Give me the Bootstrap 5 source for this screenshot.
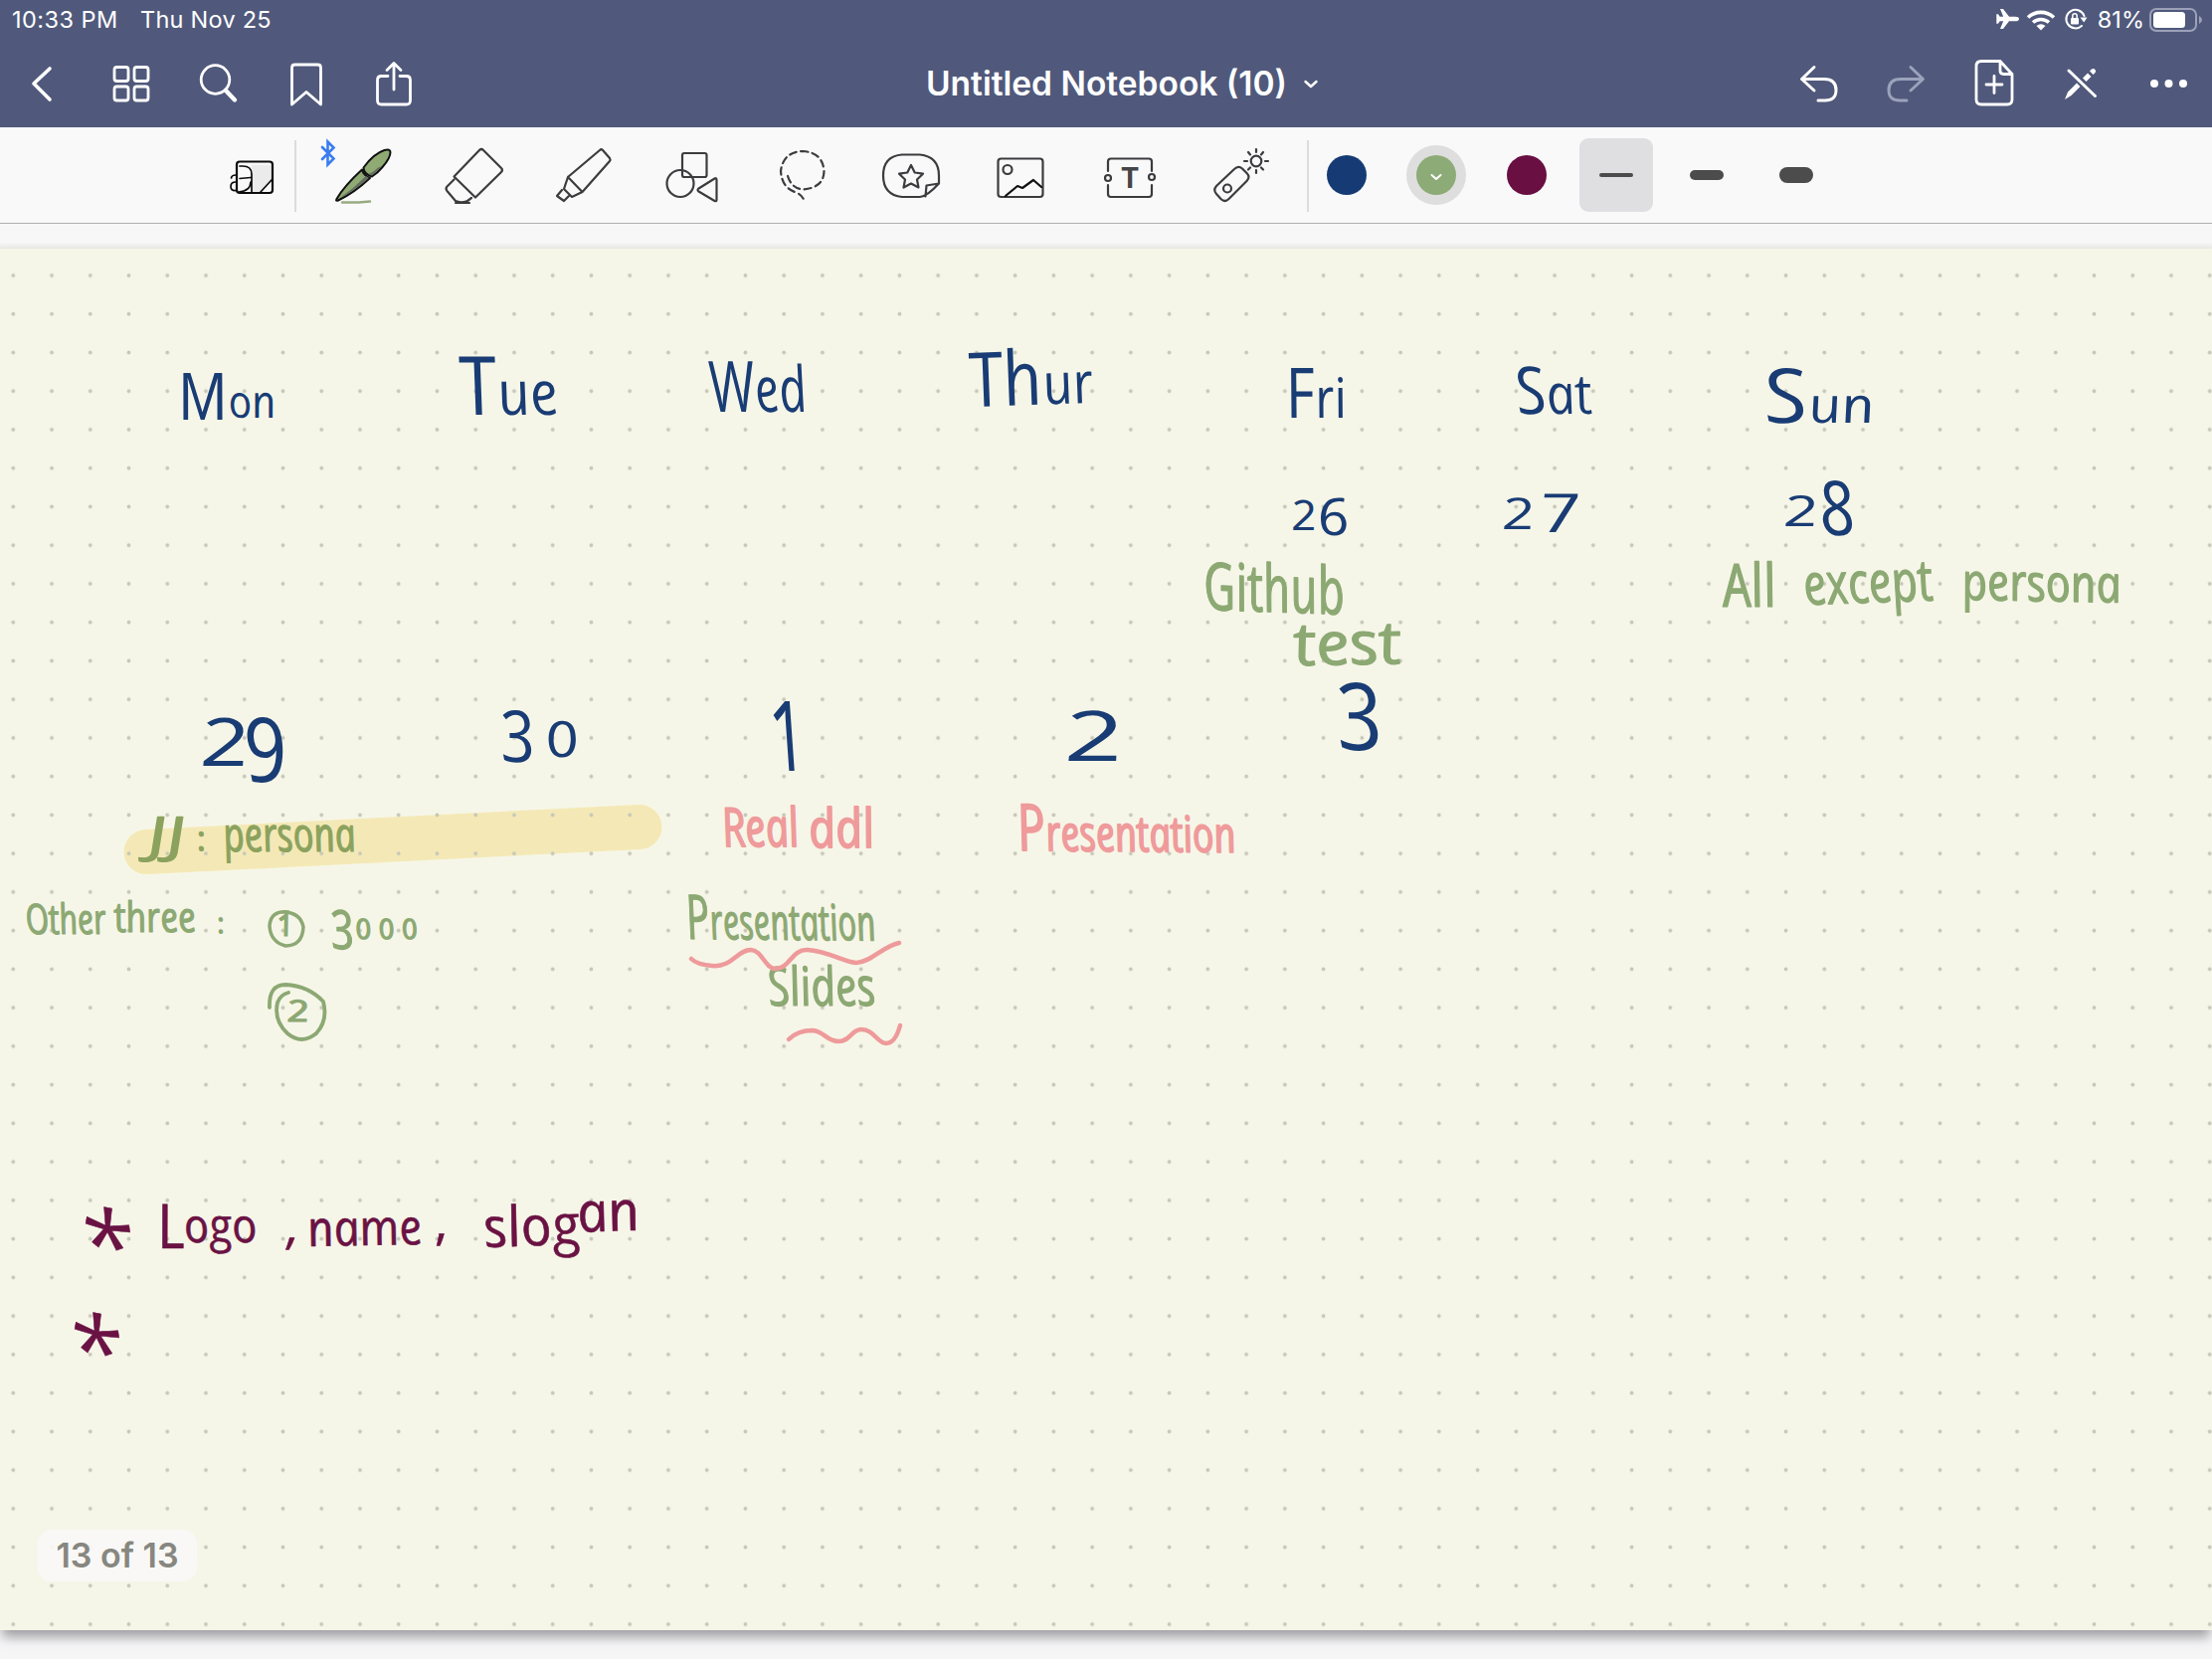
<!DOCTYPE html>
<html lang="en">
<head>
<meta charset="utf-8">
<meta name="viewport" content="width=device-width, initial-scale=1">
<title>Untitled Notebook (10)</title>
<link href="https://cdn.jsdelivr.net/npm/bootstrap@5.3.0/dist/css/bootstrap.min.css" rel="stylesheet">
<style>
body{font-family:Inter,"Liberation Sans",sans-serif;background:#f6f6f7;height:1668px;overflow:hidden}
svg{display:block;flex:none;fill:none;stroke-linecap:round;stroke-linejoin:round}
.app-head{background:#50597b;height:128px;color:#fff}
.status-row{height:40px;font-size:23.500px;line-height:40px;padding-left:12px;padding-right:8px}
.status-row .clock{width:129px;letter-spacing:.45px}
.status-row .today{letter-spacing:.25px}
.nav-row{height:88px}
.nav-row svg{stroke:#fff;stroke-width:3.6}
.doc-title{font-size:33.5px;font-weight:600;line-height:88px;padding-left:32px;white-space:nowrap}
.tools{height:97px;background:#f9f9fa;border-bottom:1.5px solid #adafad;padding-left:199px}
.tools svg{stroke:#3c3c3e;stroke-width:2.2}
.rule{width:2px;height:72px;background:#dcdcde;margin-top:13px;flex:none}
.gutter{height:25px;background:linear-gradient(#f7f7f7 75%,#e9e9e7)}
.sheet{height:1389px;background-color:#f6f6e8;box-shadow:0 9px 11px -2px rgba(90,85,95,.55)}
.ink text{font-family:"Open Sans","Noto Sans",sans-serif;font-style:italic;font-weight:400;stroke:none}
.blue{fill:#193c74}
.ink .green text{stroke:#8ca873;stroke-width:1.200px}
.ink .on-marker text{stroke:#8ba25e}
.ink .pink text{stroke:#ef9a9b;stroke-width:1.800px}
.ink .wine text{stroke:#6a1244;stroke-width:.6px}
.green{fill:#8ca873}.pink{fill:#ef9a9b}.wine{fill:#6a1244}.on-marker{fill:#8ba25e}
.pager{left:38px;bottom:49px;width:160px;height:52px;border-radius:14px;background:rgba(248,247,246,.92);color:#878780;font-size:34px;font-weight:600;line-height:52px;text-align:center}
</style>
</head>
<body>
<header class="app-head">
  <div class="status-row d-flex align-items-center">
    <span class="clock">10:33 PM</span><span class="today">Thu Nov 25</span>
    <div class="ms-auto d-flex align-items-center">
      <svg width="98" height="40" viewBox="2004 0 98 40">
        <path fill="#fff" d="M2031 19q0-2.300-4-2.300h-6l-6-7.700h-3l3.200 7.700h-3.500l-1.700-2.500h-1.700v9.600h1.700l1.700-2.500h3.500L2012 29h3l6-7.700h6q4 0 4-2.300z"/>
        <path stroke="#fff" stroke-width="3.600" stroke-linecap="butt" d="M2040 17.500a19 19 0 0 1 26 0M2045 22.500a12 12 0 0 1 16 0"/>
        <path fill="#fff" d="M2048.500 26a7 7 0 0 1 9 0l-4.500 4.500z"/>
        <path stroke="#fff" stroke-width="2" d="M2096.500 16a9.300 9.300 0 1 0-2.500 10"/>
        <path fill="#fff" d="M2092.500 17.500h7l-3.300 5z"/>
        <rect fill="#fff" x="2083" y="18" width="8" height="6.500" rx="1"/>
        <path stroke="#fff" stroke-width="1.500" d="M2084.800 18v-2a2.200 2.200 0 0 1 4.400 0v2"/>
      </svg>
      <span class="ms-2">81%</span>
      <svg class="ms-1" width="56" height="40" viewBox="2160 0 56 40">
        <rect x="2162" y="9" width="46" height="22" rx="6" stroke="#9ba1b8" stroke-width="2"/>
        <rect x="2165" y="12" width="32" height="16" rx="3.500" fill="#fff"/>
        <path fill="#9ba1b8" d="M2211 16q3 1.500 3 4t-3 4z"/>
      </svg>
    </div>
  </div>
  <div class="nav-row d-flex justify-content-between">
    <div class="d-flex">
      <svg width="88" height="88" viewBox="0 40 88 88"><path d="M50 69 34 84l16 16"/></svg>
      <svg width="88" height="88" viewBox="88 40 88 88"><g stroke-width="2.800"><rect x="115" y="67.500" width="14" height="14" rx="2.500"/><rect x="135" y="67.500" width="14" height="14" rx="2.500"/><rect x="115" y="87" width="14" height="14" rx="2.500"/><rect x="135" y="87" width="14" height="14" rx="2.500"/></g></svg>
      <svg width="88" height="88" viewBox="176 40 88 88"><circle cx="216.500" cy="80" r="14.300" stroke-width="2.800"/><path d="m227 91 9 9.500" stroke-width="4.400"/></svg>
      <svg width="88" height="88" viewBox="264 40 88 88"><path stroke-width="2.800" d="M293.500 105V68q0-3 3-3h23q3 0 3 3v37L308 92.500z"/></svg>
      <svg width="88" height="88" viewBox="352 40 88 88"><path stroke-width="2.800" d="M390 76.500h-6.500q-4 0-4 4V101q0 4 4 4h25q4 0 4-4V80.500q0-4-4-4H402M396 90V64m-7 6.500 7-7 7 7"/></svg>
    </div>
    <div class="doc-title d-flex align-items-center"><span>Untitled Notebook (10)</span>
      <svg width="14" height="88" viewBox="1310 40 14 88" style="margin-left:17px"><path stroke-width="2.400" d="m1311.500 82 5.500 5 5.500-5"/></svg></div>
    <div class="d-flex">
      <svg width="88" height="88" viewBox="1784 40 88 88"><path stroke-width="3" d="m1824 67.500-12.500 12 12.500 11.500M1812 79.500h22q12 0 12 11t-12 10.500h-6"/></svg>
      <svg width="88" height="88" viewBox="1872 40 88 88"><path stroke="#9ba2bb" stroke-width="3" d="m1921 67.500 12.500 12L1921 91M1933 79.500h-22q-12 0-12 11t12 10.500h6"/></svg>
      <svg width="88" height="88" viewBox="1960 40 88 88"><path stroke-width="2.800" d="M1992 61.500h19l12 13V100q0 5-5 5h-26q-5 0-5-5V66.500q0-5 5-5zm19 0V71q0 3.500 3.500 3.500h8.500M1997 85h16m-8-8.500v17"/></svg>
      <svg width="88" height="88" viewBox="2048 40 88 88"><path stroke-width="3" d="m2080 71 26.500 25.500"/><path fill="#fff" stroke="none" d="m2076 100 3-7.500 9-9 3.500 3.500-9 9zM2094 78.500l5-5 3.500 3.500-5 5zM2101 71.500l2-2q1.800-1.200 3.300.3t.3 3.300l-2 2z"/></svg>
      <svg width="88" height="88" viewBox="2136 40 88 88"><g fill="#fff" stroke="none"><circle cx="2166" cy="84" r="4"/><circle cx="2180.500" cy="84" r="4"/><circle cx="2195" cy="84" r="4"/></g></svg>
    </div>
  </div>
</header>

<div class="tools d-flex">
  <svg width="97" height="96" viewBox="199 128 97 96">
    <g stroke="#0c0c0c"><path stroke="none" fill="#ebebec" d="M253 166h20v16l-10 11h-10z"/><rect x="238" y="162.500" width="36" height="31.500" rx="3"/><path stroke-width="1.700" d="M241 167h3q9 0 9 8v18M241 179.500l11-1M240 193q12-1 12-10M237 176q-4 0-4.500 3M237 183q-5 0-5 4.500t5 4M273 181l-11 12"/></g>
  </svg>
  <div class="rule"></div>
  <svg width="122" height="96" viewBox="298 128 122 96">
    <path stroke="#3b7df0" stroke-width="2.600" stroke-linejoin="miter" d="m324 148 11.500 11.500-6 6v-23l6 6L324 160"/>
    <path stroke="#98aa80" stroke-width="2.400" d="M344 203.500h17l11-1"/>
    <g stroke="#111" stroke-width="2" fill="#8fab73"><path d="M338.500 200Q346 187 364 170.500q1.500 6 8 8.500-16 15-32 22.500-3 1-1.500-1.500z"/><path d="M365.500 168.500q10-14 21-17.500 6-1.500 6 2 0 6-8 15-5 6-10.500 9.500-8.500-2.500-8.500-9z"/></g>
    <path stroke="none" fill="#646b61" d="M373 176.500q4-2 10-9l-3 1q-6 6-10 6zM342 199q11-5 29-20l-3-2q-12 12-26 22z"/>
  </svg>
  <svg width="110" height="96" viewBox="420 128 110 96"><path d="M482 151q2-2 4 0l18 18q2 2 0 4l-26 25.500-21.500-21zM456.500 180.500l-7 7q-2 2 0 4.500l8.500 10q5 2.500 12 0l4-3M458 204h14"/></svg>
  <svg width="110" height="96" viewBox="530 128 110 96"><path d="M603 151q1.500-1.500 3 0l7 8q1 1.500 0 3l-27.500 31L571 178zM571 178l-4 12 8 8 10.500-5M565 191l-5 6 7 5 5-5"/></svg>
  <svg width="110" height="96" viewBox="640 128 110 96"><rect x="686" y="154" width="24.500" height="24" rx="2"/><circle cx="684" cy="184.500" r="13.500"/><path d="m718.500 179.500-16 10q-2 1.500 0 3l16 9.500q2 .8 2-1v-20q0-2.500-2-1.500z"/></svg>
  <svg width="110" height="96" viewBox="750 128 110 96"><path stroke-dasharray="7 4.500" d="M792 177q4 13 16 13.500 20-2 20.500-18-1-19-21-20.500-20 .5-22.500 20 1 16 14 21 9 3 10 11"/></svg>
  <svg width="110" height="96" viewBox="860 128 110 96"><path d="M907 155.500h18q19 2 19 21v8q-12 13-19 13.500h-18q-19-2-19-21.500t19-21zM930.500 197.500l1-11 12.500-2"/><path d="m916 166 3.700 7.500 8.300 1.200-6 5.800 1.500 8-7.500-4-7.500 4 1.500-8-6-5.800 8.300-1.200z"/></svg>
  <svg width="110" height="96" viewBox="970 128 110 96"><rect x="1003.500" y="159.500" width="45" height="38.500" rx="3"/><circle cx="1013" cy="170.500" r="4.500"/><path stroke="#111" d="m1011 197 12-10 5 2 11-8 8 7"/></svg>
  <svg width="110" height="96" viewBox="1080 128 110 96"><path d="M1114 172v-9.500q0-3 3-3h38q3 0 3 3v9.500M1114 186v9q0 3 3 3h38q3 0 3-3v-9"/><circle cx="1114" cy="179" r="3"/><circle cx="1158" cy="178" r="3"/><text x="1136" y="189" text-anchor="middle" font-size="28" font-weight="700" fill="#454547" stroke="none">T</text></svg>
  <svg width="110" height="96" viewBox="1190 128 110 96"><path d="m1223 187 18-17q4-4 8-.5l4.500 4.500q4 4 0 8l-18 18q-4 4-8 0l-4.500-5q-3.500-4 0-8z"/><circle cx="1234" cy="189.500" r="4"/><circle cx="1263" cy="162" r="5.300"/><path d="M1263 150v3m0 18v3m-12-12h3m18 0h3m-20-9 2 2.500m11 13 2 2m0-17.500-2 2.500m-11 13-2 2"/></svg>
  <div class="rule" style="margin-left:14px"></div>
  <svg width="83" height="96" viewBox="1316 128 83 96"><circle cx="1354" cy="176" r="20" fill="#163b74" stroke="none"/></svg>
  <svg width="90" height="96" viewBox="1399 128 90 96"><circle cx="1444" cy="176" r="30" fill="#dededf" stroke="none"/><circle cx="1444" cy="176" r="20" fill="#8dab76" stroke="none"/><path stroke="#fff" stroke-width="2" d="m1439.500 176 4.500 4 4.500-4"/></svg>
  <svg width="90" height="96" viewBox="1489 128 90 96"><circle cx="1535" cy="176" r="20" fill="#690f42" stroke="none"/></svg>
  <svg width="91" height="96" viewBox="1579 128 91 96"><rect x="1588" y="139" width="74" height="74" rx="9" fill="#dfdfe2" stroke="none"/><path stroke="#4c4c4c" stroke-width="4" d="M1610 176h30"/></svg>
  <svg width="90" height="96" viewBox="1670 128 90 96"><path stroke="#4c4c4c" stroke-width="10" d="M1704 176h24"/></svg>
  <svg width="90" height="96" viewBox="1760 128 90 96"><path stroke="#4c4c4c" stroke-width="16" d="M1797 176h18"/></svg>
</div>
<div class="gutter"></div>

<main class="sheet position-relative">
  <svg class="ink" width="2224" height="1389" viewBox="0 250 2224 1389">
    <defs><pattern id="dots" x="-6.100" y="257.600" width="38.745" height="38.745" patternUnits="userSpaceOnUse"><circle cx="19.400" cy="19.400" r="1.900" fill="#c6c7b8"/></pattern></defs>
    <path d="M147 856.500 643 831.500" stroke="#f4e9b6" stroke-width="45"/>
    <rect y="250" width="2224" height="1389" fill="url(#dots)"/>
    <g class="blue">
      <text transform="translate(182 422) skewX(11)" textLength="98" lengthAdjust="spacingAndGlyphs" font-size="66">M<tspan dy="-2" font-size="46">on</tspan></text>
      <text transform="translate(467 417) skewX(13)" textLength="98" lengthAdjust="spacingAndGlyphs" font-size="82">T<tspan font-size="62">ue</tspan></text>
      <text transform="translate(717 414) skewX(12)" textLength="98" lengthAdjust="spacingAndGlyphs" font-size="71">W<tspan font-size="64">ed</tspan></text>
      <text transform="translate(979 409) rotate(-2) skewX(11)" textLength="124" lengthAdjust="spacingAndGlyphs" font-size="76">Th<tspan font-size="58">ur</tspan></text>
      <text transform="translate(1296 420) skewX(11)" textLength="61" lengthAdjust="spacingAndGlyphs" font-size="70">F<tspan font-size="56">ri</tspan></text>
      <text transform="translate(1528 416) skewX(13)" textLength="76" lengthAdjust="spacingAndGlyphs" font-size="66">S<tspan font-size="56">at</tspan></text>
      <text transform="translate(1777 425) skewX(11)" textLength="110" lengthAdjust="spacingAndGlyphs" font-size="76">S<tspan font-size="50">un</tspan></text>
      <text transform="translate(1301 538) skewX(11)" textLength="58" lengthAdjust="spacingAndGlyphs" font-size="42"><tspan dy="-5">2</tspan><tspan dy="5" font-size="52">6</tspan></text>
      <text transform="translate(1512 532) skewX(11)" font-size="44" textLength="33" lengthAdjust="spacingAndGlyphs">2</text>
      <text transform="translate(1551 535) skewX(11)" font-size="54" textLength="42" lengthAdjust="spacingAndGlyphs">7</text>
      <text transform="translate(1795 529) skewX(11)" textLength="35" lengthAdjust="spacingAndGlyphs" font-size="43">2</text>
      <text transform="translate(1833 538) skewX(12)" textLength="36" lengthAdjust="spacingAndGlyphs" font-size="76">8</text>
      <text transform="translate(204 770) skewX(11)" textLength="50" lengthAdjust="spacingAndGlyphs" font-size="67">2</text>
      <text transform="translate(250 786) skewX(11)" textLength="44" lengthAdjust="spacingAndGlyphs" font-size="90">9</text>
      <text transform="translate(506 766) skewX(11)" textLength="36" lengthAdjust="spacingAndGlyphs" font-size="72">3</text>
      <text transform="translate(551 761) skewX(11)" textLength="33" lengthAdjust="spacingAndGlyphs" font-size="50">0</text>
      <text transform="translate(780 775) skewX(12)" textLength="36" lengthAdjust="spacingAndGlyphs" font-size="98">1</text>
      <text transform="translate(1074 765) skewX(14)" textLength="60" lengthAdjust="spacingAndGlyphs" font-size="70">2</text>
      <text transform="translate(1348 754) skewX(12)" textLength="48" lengthAdjust="spacingAndGlyphs" font-size="94">3</text>
    </g>
    <g class="green">
      <text transform="translate(1213 613) rotate(2) skewX(11)" textLength="142" lengthAdjust="spacingAndGlyphs" font-size="66">Github</text>
      <text transform="translate(1304 669) rotate(-1) skewX(11)" textLength="108" lengthAdjust="spacingAndGlyphs" font-size="60">test</text>
      <text transform="translate(1735 610) skewX(11)" textLength="54" lengthAdjust="spacingAndGlyphs" font-size="60">All</text>
      <text transform="translate(1817 608) rotate(-2) skewX(11)" textLength="130" lengthAdjust="spacingAndGlyphs" font-size="58">except</text>
      <text transform="translate(1975 603) rotate(1) skewX(11)" textLength="160" lengthAdjust="spacingAndGlyphs" font-size="52">persona</text>
      <g class="on-marker">
        <text transform="translate(150 857) skewX(8)" textLength="38" font-size="50" lengthAdjust="spacingAndGlyphs">JJ</text>
        <text transform="translate(200 855) skewX(11)" font-size="34">:</text>
        <text transform="translate(227 856) skewX(11)" textLength="133" lengthAdjust="spacingAndGlyphs" font-size="48">persona</text>
      </g>
      <text transform="translate(28 939) skewX(11)" textLength="81" lengthAdjust="spacingAndGlyphs" font-size="42">Other</text>
      <text transform="translate(117 937) skewX(11)" textLength="82" lengthAdjust="spacingAndGlyphs" font-size="42">three</text>
      <text transform="translate(220 938) skewX(11)" font-size="28">:</text>
      <text transform="translate(280 941) skewX(11)" font-size="30">1</text>
      <text transform="translate(335 954) skewX(11)" textLength="24" lengthAdjust="spacingAndGlyphs" font-size="54">3</text>
      <text transform="translate(359 944) skewX(11)" textLength="62" font-size="28">000</text>
      <text transform="translate(290 1027) skewX(11)" textLength="22" lengthAdjust="spacingAndGlyphs" font-size="30">2</text>
      <text transform="translate(693 944) rotate(.5) skewX(11)" textLength="190" lengthAdjust="spacingAndGlyphs" font-size="62">P<tspan font-size="50">resentation</tspan></text>
      <text transform="translate(775 1011) skewX(11)" textLength="108" lengthAdjust="spacingAndGlyphs" font-size="54">Slides</text>
    </g>
    <g class="pink">
      <text transform="translate(729 851) skewX(11)" textLength="77" lengthAdjust="spacingAndGlyphs" font-size="54">Real</text>
      <text transform="translate(816 852) skewX(11)" textLength="66" lengthAdjust="spacingAndGlyphs" font-size="54">ddl</text>
      <text transform="translate(1026 855) rotate(.5) skewX(11)" textLength="219" lengthAdjust="spacingAndGlyphs" font-size="65">P<tspan font-size="50">resentation</tspan></text>
    </g>
    <g class="wine">
      <text transform="translate(87 1286) skewX(11)" font-size="95">*</text>
      <text transform="translate(161 1255) skewX(11)" textLength="101" lengthAdjust="spacingAndGlyphs" font-size="62">L<tspan dy="-6" font-size="48">ogo</tspan></text>
      <text transform="translate(289 1250) skewX(4)" font-size="50">,</text>
      <text transform="translate(312 1253) rotate(-1) skewX(11)" textLength="115" lengthAdjust="spacingAndGlyphs" font-size="50">name</text>
      <text transform="translate(440 1246) skewX(11)" font-size="50">,</text>
      <text transform="translate(490 1254) rotate(-2) skewX(11)" textLength="159" lengthAdjust="spacingAndGlyphs" font-size="56">slog<tspan dy="-12">an</tspan></text>
      <text transform="translate(76 1392) skewX(11)" font-size="95">*</text>
    </g>
    <g stroke="#8ca873" stroke-width="3.500">
      <path d="M290 917q-18-2-19 14 1 16 16 20 17 0 18-19-3-15-21-15"/>
      <path d="M271 1013q-1-23 16-23 23 1 38 17 5 19-7 32-15 12-29 0-14-13-10-31 3-8 11-10" stroke-width="3.800"/>
    </g>
    <g stroke="#ee9a9b" stroke-width="4.500">
      <path d="M695 964q6 6 21 7c20 2 25-16 39-16 12 1 14 19 25 19 14 0 16-20 32-19 20 1 38 13 49 13 14 0 27-17 43-20"/>
      <path d="M793 1045q9-9 24-9c12 1 14 11 26 11s13-12 23-12c13 0 16 14 25 14 7 0 11-7 14-18"/>
    </g>
  </svg>
  <div class="pager position-absolute">13 of 13</div>
</main>
<script src="https://cdn.jsdelivr.net/npm/bootstrap@5.3.0/dist/js/bootstrap.bundle.min.js"></script>
</body>
</html>
